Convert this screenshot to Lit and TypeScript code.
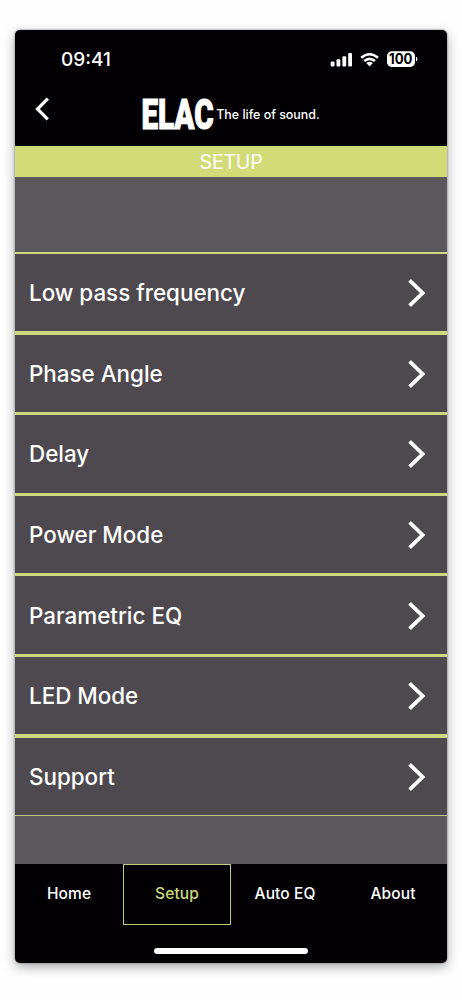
import { LitElement, html, css } from "lit";
import { customElement, property } from "lit/decorators.js";

@customElement("status-bar")
class StatusBar extends LitElement {
  static styles = css`
    :host { display: flex; justify-content: space-between; align-items: center; height: 57px; padding: 0 29px 0 46px; }
    .time { font-size: 19px; font-weight: 500; letter-spacing: 0; line-height: 24px; padding-top: 2px; }
    .icons { display: block; }
    .level { font: 700 14px Inter, sans-serif; }
  `;
  render() {
    return html`
      <span class="time">09:41</span>
      <svg class="icons" width="88" height="18" viewBox="0 0 88 18" fill="#fff">
        <rect x="0.7" y="11.4" width="3.8" height="5" rx="1" />
        <rect x="6.5" y="9.2" width="3.8" height="7.2" rx="1" />
        <rect x="12.4" y="6.2" width="3.8" height="10.2" rx="1" />
        <rect x="18.2" y="3.1" width="3.8" height="13.3" rx="1" />
        <g fill="none" stroke="#fff" stroke-width="2.6">
          <path d="M31.2 7.7Q39.6 0.8 48 7.7" />
          <path d="M34.2 11.1Q39.6 6.5 45 11.1" />
        </g>
        <path d="M36.3 13Q39.6 10.3 42.9 13L39.6 16.4Z" />
        <rect x="57" y="1.3" width="28" height="15.6" rx="4.6" />
        <path d="M86 6.8Q87.5 7.4 87.5 9.1T86 11.4Z" />
        <text class="level" x="59" y="14.2" textLength="23.4" lengthAdjust="spacingAndGlyphs" fill="#000">100</text>
      </svg>
    `;
  }
}

@customElement("brand-bar")
class BrandBar extends LitElement {
  static styles = css`
    :host { display: flex; align-items: flex-start; height: 59px; }
    .back { width: 16px; height: 24px; margin: 10px 0 0 19px; }
    .brand { width: 190px; height: 59px; margin: 0 0 0 89px; }
    .mark { font: 900 43px Roboto, sans-serif; }
    .tagline { font: 500 12.8px Inter, sans-serif; }
  `;
  render() {
    return html`
      <svg class="back" viewBox="0 0 16 24" fill="none" stroke="#fff" stroke-width="3.2">
        <path d="M13.8 1.6L3.5 12L13.8 22.4" />
      </svg>
      <svg class="brand" viewBox="0 0 190 59" fill="#fff">
        <text class="mark" x="2.4" y="42.4" textLength="72.2" lengthAdjust="spacingAndGlyphs" stroke="#fff" stroke-width="1.1">ELAC</text>
        <text class="tagline" x="77.2" y="32" textLength="103.6" lengthAdjust="spacingAndGlyphs">The life of sound.</text>
      </svg>
    `;
  }
}

@customElement("setting-row")
class SettingRow extends LitElement {
  static styles = css`
    :host { display: flex; align-items: center; justify-content: space-between; padding: 1px 21.5px 0 14px; }
    .label { font-size: 22.4px; font-weight: 500; letter-spacing: 0; line-height: 30px; }
    .chevron { width: 20px; height: 30px; }
  `;
  @property() label = "";
  render() {
    return html`
      <span class="label">${this.label}</span>
      <svg class="chevron" viewBox="0 0 20 30" fill="none" stroke="#fff" stroke-width="3.8">
        <path d="M3.6 2.4L16.6 15L3.6 27.6" />
      </svg>
    `;
  }
}

@customElement("app-root")
class AppRoot extends LitElement {
  static styles = css`
    :host {
      display: block;
      box-sizing: border-box;
      height: 1000px;
      padding: 30px 15px 37px;
      background: #fefefe;
      font-family: Inter, "Liberation Sans", sans-serif;
      color: #fff;
    }
    .phone {
      display: flex;
      flex-direction: column;
      width: 432px;
      height: 933px;
      border-radius: 5px;
      overflow: hidden;
      background: #020003;
      box-shadow: 0 4px 12px rgba(30, 25, 35, 0.38), 0 0 2px rgba(30, 25, 35, 0.6);
    }
    .title {
      height: 31px;
      line-height: 32px;
      background: #d1dc78;
      text-align: center;
      font-size: 19.6px;
      font-weight: 400;
      letter-spacing: -0.25px;
      flex: none;
    }
    .content { background: #5a585b; padding-top: 75px; height: 612px; flex: none; }
    .list {
      display: grid;
      grid-template-rows: repeat(7, 1fr);
      gap: 3.3px;
      height: 561px;
      background: #ced87d;
      border-top: 2px solid #ced87d;
      border-bottom: 1px solid #bfc77c;
    }
    .row { background: #4e494e; }
    .tabs { display: grid; grid-template-columns: repeat(4, 1fr); height: 61px; }
    .tab {
      display: flex;
      align-items: center;
      justify-content: center;
      padding-bottom: 3px;
      border: 1px solid transparent;
      font-size: 15.5px;
      font-weight: 500;
      letter-spacing: 0.1px;
    }
    .active { border-color: #c4cd73; color: #ced77e; }
    .home-indicator { width: 154px; height: 6px; border-radius: 3px; background: #fff; margin: 23px auto 0; }
  `;

  settings = ["Low pass frequency", "Phase Angle", "Delay", "Power Mode", "Parametric EQ", "LED Mode", "Support"];
  tabs = ["Home", "Setup", "Auto EQ", "About"];

  render() {
    return html`
      <div class="phone">
        <status-bar></status-bar>
        <brand-bar></brand-bar>
        <div class="title">SETUP</div>
        <div class="content">
          <div class="list">
            ${this.settings.map((s) => html`<setting-row class="row" .label=${s}></setting-row>`)}
          </div>
        </div>
        <div class="tabs">
          ${this.tabs.map((t) => html`<div class="tab ${t === "Setup" ? "active" : ""}">${t}</div>`)}
        </div>
        <div class="home-indicator"></div>
      </div>
    `;
  }
}
